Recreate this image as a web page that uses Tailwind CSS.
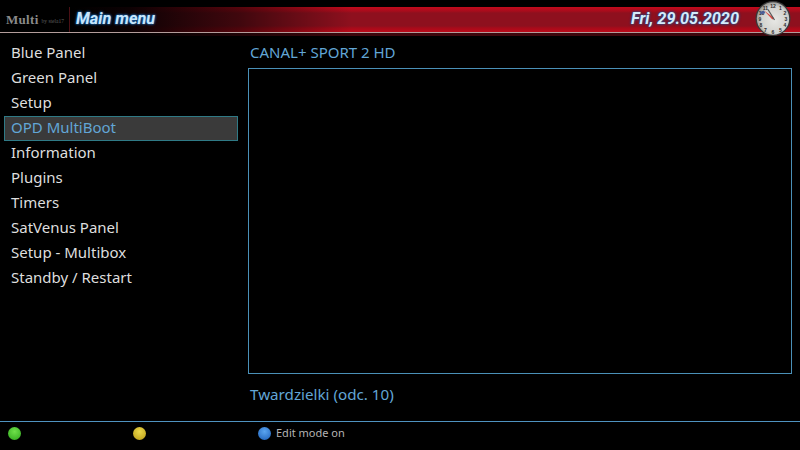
<!DOCTYPE html>
<html lang="en">
<head>
    <meta charset="UTF-8">
    <title>Main menu</title>
    <script src="https://cdn.jsdelivr.net/npm/@tailwindcss/browser@4"></script>
</head>
<body class="bg-black">
    <div class="relative w-[800px] h-[450px] overflow-hidden bg-black flex flex-col font-['Noto_Sans',sans-serif]">
        <!-- header bar -->
        <div class="mt-[7px] h-[25px] flex items-center shrink-0 bg-[linear-gradient(90deg,#000_0%,#000_9%,#0c0103_16%,rgba(0,0,0,0.55)_30%,transparent_44%),linear-gradient(180deg,#c40a1c_0%,#a80c1c_16%,#8e101e_24%,#8e101e_76%,#a80a1a_84%,#bd0a1a_100%)]">
            <div class="w-[70px] h-full flex items-center pl-[6px] border-r border-[#4a1015]">
                <span class="font-['Liberation_Serif',serif] font-bold text-[13px] text-[#8a8a8a] tracking-[0.3px]">Multi</span>
                <span class="font-['Liberation_Serif',serif] text-[5.5px] text-[#5e5e5e] ml-[3px] mt-[4px] whitespace-nowrap">by stela17</span>
            </div>
            <span class="ml-[6px] font-['Roboto',sans-serif] font-bold italic text-[16.3px] text-[#c8e6fb] [text-shadow:0_0_2px_#1a6fc0,0_0_3px_#1a6fc0]">Main menu</span>
            <span class="ml-auto mr-[61px] font-['Roboto',sans-serif] font-bold italic text-[16.3px] text-[#d5ebfb] [text-shadow:0_0_2px_#1a4f90,0_0_3px_#1a4f90]">Fri, 29.05.2020</span>
        </div>
        <div class="h-px shrink-0 bg-[#b39d9b]"></div>
        <div class="h-[3px] shrink-0 bg-[linear-gradient(90deg,#000_0%,#000_16%,#3d060c_44%,#3d060c_100%)]"></div>

        <!-- clock over the bar -->
        <svg class="absolute left-[755px] top-0 w-[36px] h-[37px]" viewBox="0 0 36 37">
            <defs>
                <radialGradient id="face" cx="55%" cy="55%" r="55%">
                    <stop offset="0" stop-color="#e8e8e5"/>
                    <stop offset="0.75" stop-color="#d2d2ce"/>
                    <stop offset="1" stop-color="#9c9c98"/>
                </radialGradient>
            </defs>
            <circle cx="18" cy="18.5" r="17.5" fill="#3a3a3a"/>
            <circle cx="18" cy="18.5" r="16.2" fill="url(#face)"/>
            <g font-family="Liberation Sans, sans-serif" font-size="5" font-weight="700" fill="#2c2c2c" text-anchor="middle">
                <text x="18" y="7.5">12</text>
                <text x="25.5" y="9.5">1</text>
                <text x="30" y="14.5">2</text>
                <text x="31" y="20.5">3</text>
                <text x="30" y="27">4</text>
                <text x="25.5" y="32">5</text>
                <text x="18" y="34">6</text>
                <text x="10.5" y="32">7</text>
                <text x="6" y="27">8</text>
                <text x="5" y="20.5">9</text>
                <text x="6.5" y="14.5">10</text>
                <text x="10.5" y="9.5">11</text>
            </g>
            <path d="M5 12l4-1.5 1.2 2.4-4 1.6z" fill="#4a5f9a"/>
            <path d="M9 10.5l10 7.6-1.6 1.5z" fill="#d8453f"/>
            <path d="M13 9.5L19.5 20" stroke="#555" stroke-width="1.2"/>
        </svg>

        <!-- main area -->
        <div class="flex flex-1 min-h-0">
            <ul class="w-[234px] ml-[4px] mt-[5px] shrink-0 text-[15px] text-[#dedede]">
                <li class="h-[25px] pl-[7px] leading-[23px]">Blue Panel</li>
                <li class="h-[25px] pl-[7px] leading-[23px]">Green Panel</li>
                <li class="h-[25px] pl-[7px] leading-[23px]">Setup</li>
                <li class="h-[25px] pl-[6px] leading-[21px] bg-[#3a3a3a] border border-[#2f7a86] text-[#62a6d6]">OPD MultiBoot</li>
                <li class="h-[25px] pl-[7px] leading-[23px]">Information</li>
                <li class="h-[25px] pl-[7px] leading-[23px]">Plugins</li>
                <li class="h-[25px] pl-[7px] leading-[23px]">Timers</li>
                <li class="h-[25px] pl-[7px] leading-[23px]">SatVenus Panel</li>
                <li class="h-[25px] pl-[7px] leading-[23px]">Setup - Multibox</li>
                <li class="h-[25px] pl-[7px] leading-[23px]">Standby / Restart</li>
            </ul>
            <div class="ml-[10px] w-[544px] flex flex-col">
                <div class="h-[32px] pl-[2px] pt-[5px] leading-[22px] text-[15px] text-[#62a6d6]">CANAL+ SPORT 2 HD</div>
                <div class="h-[306px] border border-[#4a90b8] bg-black"></div>
                <div class="mt-[9px] pl-[2px] leading-[22px] text-[15.2px] text-[#62a6d6]">Twardzielki (odc. 10)</div>
            </div>
        </div>

        <!-- footer -->
        <div class="h-px shrink-0 bg-[#4f93c0]"></div>
        <div class="h-[28px] shrink-0 pb-[5px] flex items-center text-[11px] text-[#b4b4b4]">
            <div class="w-[125px] pl-[8px]"><div class="w-[13px] h-[13px] rounded-full bg-[radial-gradient(circle_at_50%_35%,#6fe04a,#2ea81c)]"></div></div>
            <div class="w-[125px] pl-[8px]"><div class="w-[13px] h-[13px] rounded-full bg-[radial-gradient(circle_at_50%_35%,#ecd84a,#b89a14)]"></div></div>
            <div class="pl-[8px] flex items-center">
                <div class="w-[13px] h-[13px] rounded-full bg-[radial-gradient(circle_at_50%_35%,#5aa5f0,#1c5fb8)]"></div>
                <span class="ml-[5px]">Edit mode on</span>
            </div>
        </div>
    </div>
</body>
</html>
